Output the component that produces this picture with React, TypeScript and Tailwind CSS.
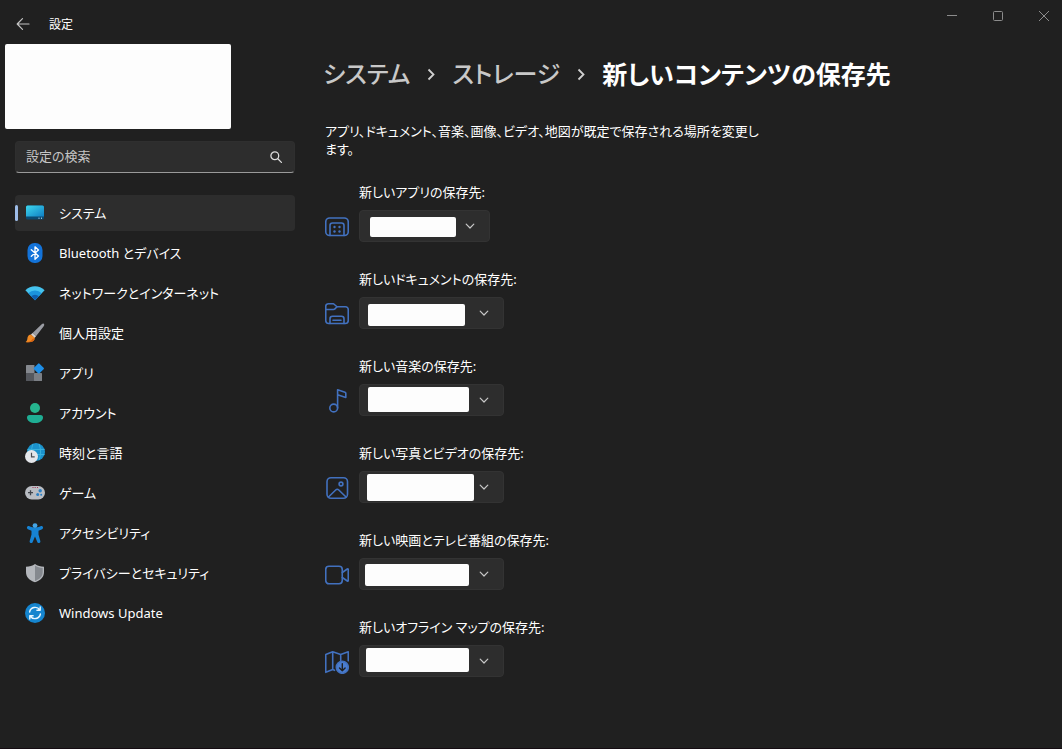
import type { ReactNode } from "react";

type NavItem = { label: string; icon: ReactNode; active?: boolean };

const navItems: NavItem[] = [
  {
    label: "システム",
    active: true,
    icon: (
      <>
        <defs>
          <linearGradient id="sys" x1="0" y1="0" x2="1" y2="1">
            <stop offset="0" stopColor="#3fd8ee" />
            <stop offset="1" stopColor="#0f7fc4" />
          </linearGradient>
        </defs>
        <rect x="1" y="2.5" width="18" height="14" rx="1.5" fill="#0b4a72" />
        <path d="M1 13.500V4a1.500 1.500 0 0 1 1.500-1.500h15A1.500 1.500 0 0 1 19 4v9.500z" fill="url(#sys)" />
        <path d="M13.500 15.200h1M16 15.200h1" stroke="#d8f3ff" strokeWidth="1" />
      </>
    ),
  },
  {
    label: "Bluetooth とデバイス",
    icon: (
      <>
        <rect x="2.500" y="0" width="15" height="20" rx="7" fill="#1373d9" />
        <path d="M6.300 6.800l7.200 6.300L10 16.200V3.800l3.500 3.100-7.200 6.300" fill="none" stroke="#fff" strokeWidth="1.300" strokeLinejoin="round" strokeLinecap="round" />
      </>
    ),
  },
  {
    label: "ネットワークとインターネット",
    icon: (
      <>
        <path d="M.4 7.300a13.600 13.600 0 0 1 19.200 0L10 17.300z" fill="#45c3ee" />
        <path d="M3.300 10.300a9.500 9.500 0 0 1 13.400 0L10 17.300z" fill="#1b94dc" />
        <path d="M6.200 13.300a5.400 5.400 0 0 1 7.600 0L10 17.300z" fill="#0f5fae" />
      </>
    ),
  },
  {
    label: "個人用設定",
    icon: (
      <>
        <path d="M18.800.8c.7.7.5 1.600-.1 2.500L11 13.200 7.600 10 16.700 1.300c.8-.8 1.500-1.100 2.100-.5z" fill="#9a9ca3" />
        <path d="M7.600 10l3.400 3.200-1.500 1.700-3.600-3.300z" fill="#d9d3cf" />
        <path d="M5.900 11.400l3.700 3.400c.5 3-3 5-9 4.200 2-1.200 1.600-2.800 2-4.700.5-2 1.800-3 3.300-2.900z" fill="#f08a24" />
        <path d="M.6 19c4 .2 6-1 7-3.200l2-.3c.1 2.800-3.500 4.300-9 3.500z" fill="#d96512" />
      </>
    ),
  },
  {
    label: "アプリ",
    icon: (
      <>
        <rect x="1" y="2" width="8.500" height="8.500" rx=".6" fill="#85898f" />
        <rect x="1" y="10" width="8.500" height="8" rx=".6" fill="#55585e" />
        <rect x="9" y="10" width="8" height="8" rx=".6" fill="#7b7f85" />
        <rect x="9.900" y="1.600" width="7.800" height="7.800" rx="1" transform="rotate(45 13.800 5.500)" fill="#1e8fe8" />
      </>
    ),
  },
  {
    label: "アカウント",
    icon: (
      <>
        <circle cx="10" cy="5" r="5" fill="#26b58f" />
        <path d="M4.500 12h11A2.500 2.500 0 0 1 18 14.500c0 3.500-3.500 5.500-8 5.500s-8-2-8-5.500A2.500 2.500 0 0 1 4.500 12z" fill="#1fae94" />
      </>
    ),
  },
  {
    label: "時刻と言語",
    icon: (
      <>
        <circle cx="11" cy="9" r="9" fill="#1b92cc" />
        <path d="M2.500 6.500h17M2.500 11.500h17M8 1c-2 5-2 11 0 16M14 1c2 5 2 11 0 16" stroke="#38b0dc" strokeWidth="1" fill="none" />
        <circle cx="6.500" cy="13.500" r="6.500" fill="#e4e6ea" />
        <path d="M6.500 9.800v4h3.200" stroke="#4a4d52" strokeWidth="1.200" fill="none" />
      </>
    ),
  },
  {
    label: "ゲーム",
    icon: (
      <>
        <rect x="0" y="3" width="20" height="13.500" rx="6.700" fill="#b9bdc3" />
        <path d="M3 9.700h5M5.500 7.200v5" stroke="#3f434a" strokeWidth="1.300" />
        <circle cx="15.200" cy="7.800" r="1.700" fill="#2a7fc4" />
        <circle cx="12.700" cy="11.500" r="1.500" fill="#2a7fc4" />
        <circle cx="16.200" cy="11.700" r="1" fill="#2a7fc4" />
        <path d="M7.500 4.500h1M9.700 4.500h1M12 4.500h1" stroke="#a03050" strokeWidth="1" />
      </>
    ),
  },
  {
    label: "アクセシビリティ",
    icon: (
      <>
        <path d="M2 4.300c.4-1.300 1.700-1.400 2.800-.9 3.200 1.500 7.200 1.500 10.400 0 1.100-.5 2.400-.4 2.800.9.300 1.100-.5 1.800-1.500 2.200l-3 1.200v3.800l1.800 6.600c.6 2-2.300 2.800-3 .9L10 13.500 7.700 19c-.7 1.900-3.600 1.100-3-.9l1.800-6.600V7.700l-3-1.200C2.500 6.100 1.700 5.400 2 4.300z" fill="#1683d4" />
        <circle cx="10" cy="2.600" r="2.400" fill="#45a5e6" />
      </>
    ),
  },
  {
    label: "プライバシーとセキュリティ",
    icon: (
      <>
        <path d="M10 1c2.500 1.800 5.500 2.600 9 2.700V9c0 5-3.200 8.300-9 10.300C4.200 17.300 1 14 1 9V3.700C4.500 3.600 7.500 2.800 10 1z" fill="#b4b7bc" />
        <path d="M10 2.500c2.300 1.400 4.800 2.200 7.700 2.400V9c0 4.200-2.700 7.100-7.700 8.900z" fill="#85898f" />
      </>
    ),
  },
  {
    label: "Windows Update",
    icon: (
      <>
        <circle cx="10" cy="10" r="10" fill="#1585cf" />
        <path d="M4.600 9a5.600 5.600 0 0 1 10.200-2M15.400 11a5.600 5.600 0 0 1-10.200 2M15.200 4v3.300h-3.300M4.800 16v-3.300h3.300" fill="none" stroke="#e8f6ff" strokeWidth="1.400" strokeLinecap="round" strokeLinejoin="round" />
      </>
    ),
  },
];

type Location = { id: string; label: string; icon: ReactNode; box: string; cover: string };

const locations: Location[] = [
  {
    id: "apps",
    label: "新しいアプリの保存先:",
    box: "w-[131px]",
    cover: "left-[11px] top-[7px] w-[86px] h-5",
    icon: (
      <>
        <rect x=".75" y="3" width="22.500" height="17.500" rx="4" />
        <path d="M5 20.500v-10A2.500 2.500 0 0 1 7.500 8h9a2.500 2.500 0 0 1 2.500 2.500v10" />
        <g fill="#4271bf" stroke="none">
          <circle cx="9.500" cy="12" r="1.200" />
          <circle cx="14.500" cy="12" r="1.200" />
          <circle cx="9.500" cy="16.500" r="1.200" />
          <circle cx="14.500" cy="16.500" r="1.200" />
        </g>
      </>
    ),
  },
  {
    id: "documents",
    label: "新しいドキュメントの保存先:",
    box: "w-[145px]",
    cover: "left-[9px] top-[7px] w-[97px] h-[22px]",
    icon: (
      <>
        <path d="M.75 18.500v-14A2.750 2.750 0 0 1 3.500 1.750h5l3.500 3h8.500a2.750 2.750 0 0 1 2.750 2.750v11a3 3 0 0 1-3 3H3.750a3 3 0 0 1-3-3z" />
        <path d="M.75 7.500H8.500c.6 0 1-.2 1.400-.6L12 4.750" />
        <path d="M5 21.500v-4.750A2.500 2.500 0 0 1 7.500 14.250h9a2.500 2.500 0 0 1 2.500 2.500v4.750M8 18.250h8" />
      </>
    ),
  },
  {
    id: "music",
    label: "新しい音楽の保存先:",
    box: "w-[145px]",
    cover: "left-[9px] top-[3px] w-[101px] h-[25px]",
    icon: (
      <>
        <circle cx="8.700" cy="19" r="3.900" />
        <path d="M12.600 19V.8l7.400 2.400c.5.200.8.500.8 1v4.200l-8.200-2.600" />
      </>
    ),
  },
  {
    id: "photos",
    label: "新しい写真とビデオの保存先:",
    box: "w-[145px]",
    cover: "left-2 top-[3px] w-[107px] h-[27px]",
    icon: (
      <>
        <rect x="2" y="1.750" width="20.500" height="20.500" rx="4" />
        <circle cx="16" cy="8" r="1.900" />
        <path d="M3.500 21l7.200-7a2.200 2.200 0 0 1 3.100 0L21 21" />
      </>
    ),
  },
  {
    id: "movies",
    label: "新しい映画とテレビ番組の保存先:",
    box: "w-[145px]",
    cover: "left-1.5 top-1.5 w-26 h-[22px]",
    icon: (
      <>
        <rect x=".75" y="3.250" width="16.500" height="17.500" rx="3.200" />
        <path d="M17.300 9.500l5-3.500c.5-.3.950-.1.950.5v11c0 .6-.450.800-.950.5l-5-3.500" />
      </>
    ),
  },
  {
    id: "maps",
    label: "新しいオフライン マップの保存先:",
    box: "w-[145px]",
    cover: "left-[7px] top-[3px] w-[103px] h-6",
    icon: (
      <>
        <path d="M9.500 20.300l-1.800-.7-6.950 2.700V4.500l6.950-2.700 8 2.700 7.550-2.700v9M7.700 1.800v17.800M15.700 4.500v6" />
        <circle cx="17.300" cy="17.300" r="6" fill="#4a7dd0" />
        <path d="M17.300 13.700v7M14.500 18l2.800 2.800 2.800-2.800" stroke="#202020" strokeWidth="1.400" />
      </>
    ),
  },
];

function Crumb() {
  return (
    <svg className="mx-3.5 size-3.5 shrink-0" viewBox="0 0 14 14" fill="none" stroke="#cfcfcf" strokeWidth="1.800" aria-hidden="true">
      <path d="M4.500 2.500l5 5-5 5" />
    </svg>
  );
}

export default function App() {
  return (
    <div className="flex min-h-screen flex-col border-b border-[#150c12] bg-[#202020] text-[13px] text-white [font-family:'Noto_Sans','Noto_Sans_CJK_JP',sans-serif] [font-feature-settings:'palt']">
      <header className="flex h-11 items-start justify-between">
        <div className="flex items-center pt-3 pl-4">
          <button type="button" aria-label="戻る" className="flex h-6 w-4 items-center">
            <svg className="size-3.5" viewBox="0 0 14 14" fill="none" stroke="#c4c4c4" strokeWidth="1.200" strokeLinecap="round" strokeLinejoin="round">
              <path d="M13 7H1.200M6.500 1.700L1.200 7l5.300 5.300" />
            </svg>
          </button>
          <span className="pt-px pl-[17px] text-xs">設定</span>
        </div>
        <div className="flex gap-[10px] text-[#8c8c8c]">
          <button type="button" aria-label="最小化" className="flex h-8 w-9 items-center justify-center">
            <svg className="size-3" viewBox="0 0 12 12" stroke="currentColor"><path d="M1 5.500h10" /></svg>
          </button>
          <button type="button" aria-label="最大化" className="flex h-8 w-9 items-center justify-center">
            <svg className="size-3" viewBox="0 0 12 12" fill="none" stroke="currentColor"><rect x="1.500" y="1.500" width="9" height="9" rx="1" /></svg>
          </button>
          <button type="button" aria-label="閉じる" className="flex h-8 w-9 items-center justify-center">
            <svg className="size-3" viewBox="0 0 12 12" stroke="currentColor"><path d="M1 1l10 10M11 1L1 11" /></svg>
          </button>
        </div>
      </header>

      <div className="flex grow">
        <aside className="w-[295px] shrink-0">
          <div className="ml-[5px] h-[85px] w-[226px] rounded-xs bg-[#fdfdfd]" />
          <div className="pt-3 pl-[15px]">
            <label className="flex h-8 items-center rounded border border-[#2f2f2f] border-b-[#9a9a9a] bg-[#2d2d2d] pr-3 pl-2.5">
              <input type="search" aria-label="設定の検索" placeholder="設定の検索" className="w-full min-w-0 bg-transparent outline-none placeholder:text-[#c5c5c5]" />
              <svg className="size-3 shrink-0" viewBox="0 0 12 12" fill="none" stroke="#dcdcdc" strokeWidth="1.300" strokeLinecap="round" aria-hidden="true">
                <circle cx="4.800" cy="4.800" r="3.900" />
                <path d="M7.800 7.800l3.600 3.600" />
              </svg>
            </label>
            <nav className="flex flex-col gap-1 pt-[22px]">
              {navItems.map((item) => (
                <a
                  key={item.label}
                  href="#"
                  aria-current={item.active ? "page" : undefined}
                  className={item.active ? "flex h-9 items-center rounded bg-[#2d2d2d]" : "flex h-9 items-center rounded"}
                >
                  <span className={item.active ? "h-4 w-[3px] rounded-full bg-[#9dbce8]" : "h-4 w-[3px]"} />
                  <svg className="ml-[7px] size-5 shrink-0" viewBox="0 0 20 20" aria-hidden="true">{item.icon}</svg>
                  <span className="pt-px pl-3.5">{item.label}</span>
                </a>
              ))}
            </nav>
          </div>
        </aside>

        <main className="min-w-0 grow pt-3 pl-7">
          <h1 className="flex items-center text-2xl leading-9 font-medium">
            <a href="#" className="text-[#c8c8c8]">システム</a>
            <Crumb />
            <a href="#" className="text-[#c8c8c8]">ストレージ</a>
            <Crumb />
            <span className="text-[25px] leading-9 font-semibold">新しいコンテンツの保存先</span>
          </h1>
          <p className="max-w-[440px] pt-[30px] pl-0.5 leading-[18px]">
            アプリ、ドキュメント、音楽、画像、ビデオ、地図が既定で保存される場所を変更します。
          </p>
          <div className="flex flex-col gap-[27px] pt-6 pl-0.5">
            {locations.map((loc) => (
              <div key={loc.id} className="flex items-end gap-2.5">
                <svg className="mb-[3px] size-6 shrink-0" viewBox="0 0 24 24" fill="none" stroke="#4271bf" strokeWidth="1.600" strokeLinejoin="round" strokeLinecap="round" aria-hidden="true">
                  {loc.icon}
                </svg>
                <div className="flex flex-col items-start gap-2">
                  <label htmlFor={loc.id} className="leading-5">{loc.label}</label>
                  <div className={`relative h-8 ${loc.box}`}>
                    <select id={loc.id} className="size-full appearance-none rounded border border-[#333333] bg-[#2d2d2d]">
                      <option value="" />
                    </select>
                    <span className={`pointer-events-none absolute rounded-xs bg-[#fdfdfd] ${loc.cover}`} />
                    <svg className="pointer-events-none absolute top-[11px] right-[15px] size-2.5" viewBox="0 0 10 10" fill="none" stroke="#c8c8c8" strokeWidth="1.200" strokeLinecap="round" strokeLinejoin="round" aria-hidden="true">
                      <path d="M1.200 3.200L5 7l3.800-3.800" />
                    </svg>
                  </div>
                </div>
              </div>
            ))}
          </div>
        </main>
      </div>
    </div>
  );
}
